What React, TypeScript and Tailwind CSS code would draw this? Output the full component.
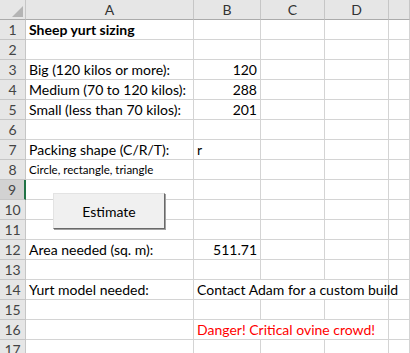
import React from 'react'

type Row = {
  n: number
  a?: string
  b?: string
  bAlign?: 'left' | 'right'
  bSpan?: boolean
  bold?: boolean
  small?: boolean
  red?: boolean
  selected?: boolean
}

const rows: Row[] = [
  { n: 1, a: 'Sheep yurt sizing', bold: true },
  { n: 2 },
  { n: 3, a: 'Big (120 kilos or more):', b: '120', bAlign: 'right' },
  { n: 4, a: 'Medium (70 to 120 kilos):', b: '288', bAlign: 'right' },
  { n: 5, a: 'Small (less than 70 kilos):', b: '201', bAlign: 'right' },
  { n: 6 },
  { n: 7, a: 'Packing shape (C/R/T):', b: 'r', bAlign: 'left' },
  { n: 8, a: 'Circle, rectangle, triangle', small: true },
  { n: 9, selected: true },
  { n: 10 },
  { n: 11 },
  { n: 12, a: 'Area needed (sq. m):', b: '511.71', bAlign: 'right' },
  { n: 13 },
  { n: 14, a: 'Yurt model needed:', b: 'Contact Adam for a custom build', bAlign: 'left', bSpan: true },
  { n: 15 },
  { n: 16, b: 'Danger! Critical ovine crowd!', bAlign: 'left', bSpan: true, red: true },
  { n: 17 },
]

const cell = 'h-[20px] border-r border-b border-[#d4d4d4] flex items-end overflow-visible whitespace-nowrap px-[3px] pb-[1px] leading-[17px]'

export default function App() {
  return (
    <div className="relative w-[410px] h-[353px] overflow-hidden bg-white text-black text-[14px]" style={{ fontFamily: 'Lato, "Liberation Sans", sans-serif' }}>
      <div className="grid grid-cols-[26px_168px_67px_64px_64px_1fr]">
        {/* column headers */}
        <div className="h-[20px] bg-[#e6e6e6] border-r border-b border-r-[#c6c6c6] border-b-[#ababab] relative">
          <svg className="absolute left-[12px] top-[6px]" width="11" height="11" viewBox="0 0 11 11">
            <polygon points="11,0 11,11 0,11" fill="#b4b4b4" />
          </svg>
        </div>
        {['A', 'B', 'C', 'D', ''].map((c, i) => (
          <div key={i} className="h-[20px] bg-[#e6e6e6] border-r border-b border-r-[#c6c6c6] border-b-[#ababab] flex items-center justify-center text-[#333] leading-none">
            {c}
          </div>
        ))}

        {rows.map((r) => (
          <React.Fragment key={r.n}>
            <div
              className={
                r.selected
                  ? 'h-[20px] bg-[#d2d2d2] border-b border-[#c6c6c6] border-r-2 border-r-[#217346] flex items-center justify-center text-[#444] leading-none'
                  : 'h-[20px] bg-[#e6e6e6] border-b border-r border-[#c6c6c6] flex items-center justify-center text-[#444] leading-none'
              }
            >
              {r.n}
            </div>
            <div className={cell}>
              {r.a && (
                <span className={r.bold ? 'font-bold' : r.small ? 'text-[11.5px]' : ''}>{r.a}</span>
              )}
            </div>
            <div
              className={
                cell +
                (r.bSpan ? ' col-span-3' : '') +
                (r.bAlign === 'right' ? ' justify-end' : '') +
                (r.red ? ' text-[#ff0000]' : '')
              }
            >
              {r.b}
            </div>
            {!r.bSpan && (
              <>
                <div className={cell}></div>
                <div className={cell}></div>
              </>
            )}
            <div className={cell}></div>
          </React.Fragment>
        ))}
      </div>

      {/* form control button floating over the sheet */}
      <button className="absolute left-[53px] top-[193px] w-[112px] h-[36px] bg-[#f0f0f0] border border-t-[#e3e3e3] border-l-[#e3e3e3] border-r-[#696969] border-b-[#696969] shadow-[1px_1px_0_#a0a0a0] text-[14px] text-black flex items-center justify-center">
        Estimate
      </button>
    </div>
  )
}
